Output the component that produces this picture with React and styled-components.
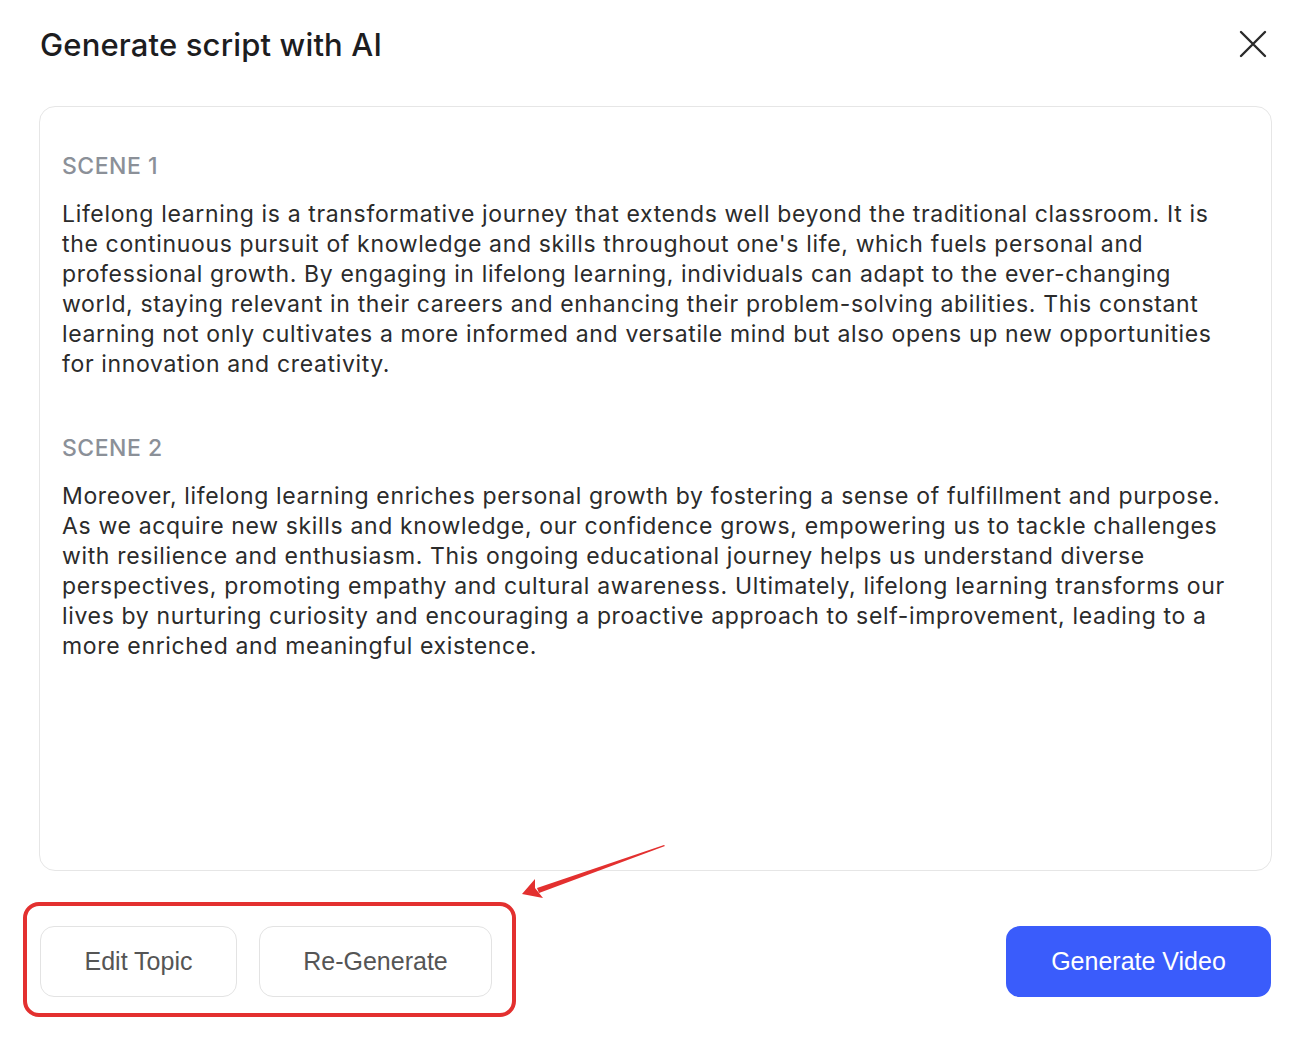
import React from 'react'
import styled, { createGlobalStyle } from 'styled-components'

const scenes = [
  {
    title: 'Scene 1',
    lines: [
      'Lifelong learning is a transformative journey that extends well beyond the traditional classroom. It is',
      "the continuous pursuit of knowledge and skills throughout one's life, which fuels personal and",
      'professional growth. By engaging in lifelong learning, individuals can adapt to the ever-changing',
      'world, staying relevant in their careers and enhancing their problem-solving abilities. This constant',
      'learning not only cultivates a more informed and versatile mind but also opens up new opportunities',
      'for innovation and creativity.',
    ],
  },
  {
    title: 'Scene 2',
    lines: [
      'Moreover, lifelong learning enriches personal growth by fostering a sense of fulfillment and purpose.',
      'As we acquire new skills and knowledge, our confidence grows, empowering us to tackle challenges',
      'with resilience and enthusiasm. This ongoing educational journey helps us understand diverse',
      'perspectives, promoting empathy and cultural awareness. Ultimately, lifelong learning transforms our',
      'lives by nurturing curiosity and encouraging a proactive approach to self-improvement, leading to a',
      'more enriched and meaningful existence.',
    ],
  },
]

function App() {
  return (
    <>
      <GlobalStyle />
      <Dialog>
        <Header>
          <Title>Generate script with AI</Title>
          <CloseButton aria-label="Close">
            <svg width="30" height="30" viewBox="0 0 30 30">
              <path d="M3 3 L27 27 M27 3 L3 27" stroke="#2a2a2a" strokeWidth="2.4" strokeLinecap="round" />
            </svg>
          </CloseButton>
        </Header>

        <ScriptCard>
          {scenes.map((scene) => (
            <Scene key={scene.title}>
              <SceneLabel>{scene.title}</SceneLabel>
              <SceneText>
                {scene.lines.map((line) => (
                  <Line key={line}>{line}</Line>
                ))}
              </SceneText>
            </Scene>
          ))}
        </ScriptCard>

        <Footer>
          <ButtonGroup>
            <OutlineButton $width={197}>Edit Topic</OutlineButton>
            <OutlineButton $width={233}>Re-Generate</OutlineButton>
            <Highlight />
          </ButtonGroup>
          <PrimaryButton>Generate Video</PrimaryButton>
        </Footer>

        <Arrow width="150" height="64" viewBox="0 0 150 64">
          <path d="M146 3 L147 4 L21 51 L19 46 Z" fill="#e3302f" />
          <path d="M4 52 L17 37 L17 46 L25 56 Z" fill="#e3302f" />
        </Arrow>
      </Dialog>
    </>
  )
}

export default App

const GlobalStyle = createGlobalStyle`
  body {
    margin: 0;
    background: #ffffff;
  }
`

const Dialog = styled.div`
  position: relative;
  width: 1314px;
  height: 1038px;
  box-sizing: border-box;
  padding: 20px 42px 0 39px;
  display: flex;
  flex-direction: column;
  background: #ffffff;
  font-family: Inter, 'Noto Sans', sans-serif;
`

const Header = styled.div`
  height: 48px;
  display: flex;
  align-items: center;
  justify-content: space-between;
  margin-bottom: 38px;
  padding-left: 1px;
`

const Title = styled.h1`
  margin: 0;
  color: #1d1d1f;
  font-size: 31px;
  font-weight: 500;
  letter-spacing: 0.15px;
`

const CloseButton = styled.button`
  display: flex;
  align-items: center;
  justify-content: center;
  padding: 0;
  margin-right: 4px;
  border: none;
  background: transparent;
  cursor: pointer;
`

const ScriptCard = styled.div`
  height: 765px;
  box-sizing: border-box;
  padding: 44px 20px 0 22px;
  border: 1px solid #e6e6e6;
  border-radius: 16px;
  display: flex;
  flex-direction: column;
  gap: 54px;
`

const Scene = styled.div`
  display: flex;
  flex-direction: column;
  gap: 18px;
`

const SceneLabel = styled.div`
  color: #8b9098;
  font-size: 23px;
  font-weight: 500;
  line-height: 30px;
  letter-spacing: 0.5px;
  text-transform: uppercase;
`

const SceneText = styled.p`
  margin: 0;
  color: #2b2b2b;
  font-size: 23px;
  line-height: 30px;
  letter-spacing: 0.65px;
`

const Line = styled.span`
  display: block;
  white-space: nowrap;
`

const Footer = styled.div`
  display: flex;
  align-items: center;
  justify-content: space-between;
  margin-top: 55px;
  padding-left: 1px;
`

const ButtonGroup = styled.div`
  position: relative;
  display: flex;
  gap: 22px;
`

const OutlineButton = styled.button`
  width: ${(p) => p.$width}px;
  height: 71px;
  border: 1px solid #e3e3e3;
  border-radius: 14px;
  background: #ffffff;
  color: #555555;
  font-family: 'Liberation Sans', Arial, sans-serif;
  font-size: 25px;
  cursor: pointer;
`

const Highlight = styled.div`
  position: absolute;
  left: -17px;
  top: -24px;
  width: 493px;
  height: 115px;
  box-sizing: border-box;
  border: 4px solid #e3302f;
  border-radius: 16px;
  pointer-events: none;
`

const PrimaryButton = styled.button`
  width: 265px;
  height: 71px;
  margin-right: 1px;
  border: none;
  border-radius: 14px;
  background: #3a5cfb;
  color: #ffffff;
  font-family: 'Liberation Sans', Arial, sans-serif;
  font-size: 25px;
  cursor: pointer;
`

const Arrow = styled.svg`
  position: absolute;
  left: 518px;
  top: 842px;
  pointer-events: none;
`
